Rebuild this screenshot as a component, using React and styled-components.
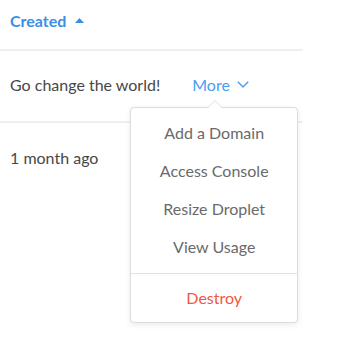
import styled, { createGlobalStyle } from "styled-components";

const GlobalStyle = createGlobalStyle`
  html, body {
    margin: 0;
    padding: 0;
    background: #fff;
  }
  body {
    font-family: "Lato", "Liberation Sans", sans-serif;
    -webkit-font-smoothing: antialiased;
  }
`;

const Page = styled.div`
  min-height: 355px;
`;

const Table = styled.div`
  width: 303px;
`;

const HeaderRow = styled.div`
  display: flex;
  align-items: center;
  padding-left: 10px;
  border-bottom: 2px solid #efefef;
  box-sizing: border-box;
  height: 51px;
`;

const SortLabel = styled.button`
  display: flex;
  align-items: center;
  gap: 9px;
  padding: 0;
  border: 0;
  background: none;
  font: inherit;
  font-size: 16px;
  font-weight: 700;
  color: #3b8ee8;
  cursor: pointer;
  margin-top: -8px;
`;

const Row = styled.div`
  height: 72px;
  display: flex;
  align-items: center;
  padding: 0 0 4px 10px;
  border-bottom: ${(p) => (p.$last ? "none" : "2px solid #efefef")};
  box-sizing: border-box;
  font-size: 16px;
  color: #474747;
`;

const MoreWrap = styled.div`
  position: relative;
  margin-left: 32px;
`;

const MoreButton = styled.button`
  display: flex;
  align-items: center;
  gap: 7px;
  padding: 0;
  border: 0;
  background: none;
  font: inherit;
  font-size: 16px;
  color: #4b9cf0;
  cursor: pointer;
`;

const Menu = styled.div`
  position: absolute;
  left: -62px;
  top: 32px;
  width: 168px;
  background: #fff;
  border: 1px solid #dcdcdc;
  border-radius: 4px;
  box-shadow: 0 2px 6px rgba(0, 0, 0, 0.08);
  box-sizing: border-box;
  z-index: 2;

  &::before,
  &::after {
    content: "";
    position: absolute;
    left: 76px;
    width: 0;
    height: 0;
    border-left: 8px solid transparent;
    border-right: 8px solid transparent;
  }
  &::before {
    top: -8px;
    border-bottom: 8px solid #dcdcdc;
  }
  &::after {
    top: -7px;
    border-bottom: 8px solid #fff;
  }
`;

const MenuGroup = styled.div`
  padding: ${(p) => (p.$danger ? "5px 0" : "6px 0 7px")};
  border-top: ${(p) => (p.$danger ? "1px solid #e2e2e2" : "none")};
`;

const MenuItem = styled.div`
  height: 38px;
  display: flex;
  align-items: center;
  justify-content: center;
  font-size: 16px;
  color: ${(p) => (p.$danger ? "#f1583f" : "#6a6a6a")};
  cursor: pointer;
`;

const Arrow = ({ up }) => (
  <svg width="9" height="5" viewBox="0 0 9 5">
    <path d={up ? "M0 5 L4.5 0 L9 5 Z" : "M0 0 L4.5 5 L9 0 Z"} fill="#3b8ee8" />
  </svg>
);

const Chevron = () => (
  <svg width="12" height="7" viewBox="0 0 12 7" fill="none">
    <path d="M0.8 0.8 L6 6 L11.2 0.8" stroke="#4b9cf0" strokeWidth="1.4" />
  </svg>
);

export default function App() {
  const actions = ["Add a Domain", "Access Console", "Resize Droplet", "View Usage"];
  return (
    <>
      <GlobalStyle />
      <Page>
        <Table>
          <HeaderRow>
            <SortLabel>
              Created <Arrow up />
            </SortLabel>
          </HeaderRow>
          <Row>
            Go change the world!
            <MoreWrap>
              <MoreButton>
                More <Chevron />
              </MoreButton>
              <Menu>
                <MenuGroup>
                  {actions.map((a) => (
                    <MenuItem key={a}>{a}</MenuItem>
                  ))}
                </MenuGroup>
                <MenuGroup $danger>
                  <MenuItem $danger>Destroy</MenuItem>
                </MenuGroup>
              </Menu>
            </MoreWrap>
          </Row>
          <Row $last>1 month ago</Row>
        </Table>
      </Page>
    </>
  );
}
